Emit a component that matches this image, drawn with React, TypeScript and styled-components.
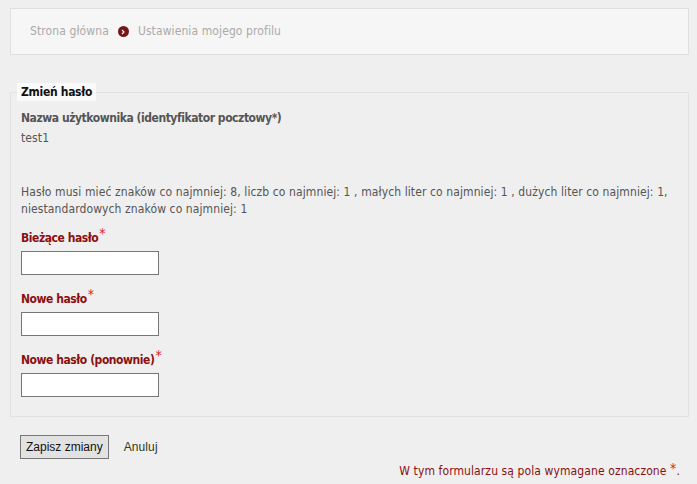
import styled, { createGlobalStyle } from 'styled-components';

const GlobalStyle = createGlobalStyle`
    body {
        margin: 0;
        background: #efefef;
        font-family: "DejaVu Sans Condensed", "DejaVu Sans", sans-serif;
        font-size: 12px;
        letter-spacing: 0.1px;
        color: #555;
    }
`;

const Page = styled.div`
    padding: 8px 8px 0 10px;
`;

const Breadcrumb = styled.nav`
    display: flex;
    align-items: center;
    gap: 9px;
    height: 45px;
    padding-left: 19px;
    background: #f6f6f6;
    border: 1px solid #e0e0e0;
    color: #aaa;
`;

const Crumb = styled.span`
    line-height: 17px;
`;

const Arrow = styled.span`
    display: inline-flex;
    align-items: center;
    justify-content: center;
    width: 11px;
    height: 11px;
    border-radius: 50%;
    background: #7a1414;
`;

const Fieldset = styled.fieldset`
    margin: 28px 0 0 0;
    padding: 0 10px 19px 10px;
    border: 1px solid #e2e2e2;
    min-width: 0;
`;

const Legend = styled.legend`
    margin-left: -4px;
    padding: 0 4px;
    height: 18px;
    line-height: 18px;
    background: #fafafa;
    font-weight: bold;
    letter-spacing: -0.3px;
    color: #111;
`;

const Label = styled.div<{ $required?: boolean }>`
    font-weight: bold;
    line-height: 17px;
    letter-spacing: -0.45px;
    color: ${p => (p.$required ? '#8b1010' : '#555')};
`;

const Value = styled.div`
    line-height: 17px;
    margin-top: 3px;
`;

const Help = styled.p`
    margin: 37px 0 0 0;
    line-height: 17px;
`;

const Star = styled.span`
    color: #e02020;
    font-size: 14px;
    font-weight: normal;
    line-height: 0;
    position: relative;
    top: -4px;
    margin-left: 1px;
`;

const Field = styled.div<{ $first?: boolean }>`
    margin-top: ${p => (p.$first ? '12px' : '16px')};
`;

const Input = styled.input`
    display: block;
    box-sizing: border-box;
    width: 138px;
    height: 24px;
    margin-top: 4px;
    border: 1px solid #777;
    background: #fff;
`;

const Actions = styled.div`
    display: flex;
    align-items: center;
    gap: 15px;
    margin: 18px 0 0 10px;
`;

const Button = styled.button`
    box-sizing: border-box;
    height: 24px;
    padding: 0 5px;
    border: 1px solid #777;
    background: #e2e2e2;
    font-family: "Liberation Sans", Arial, sans-serif;
    font-size: 12px;
    color: #111;
`;

const Cancel = styled.a`
    font-family: "Liberation Sans", Arial, sans-serif;
    font-size: 12px;
    color: #2f3a1c;
    text-decoration: none;
`;

const Note = styled.p`
    margin: 4px 9px 0 0;
    text-align: right;
    line-height: 17px;
    color: #8b1010;
`;

const NoteStar = styled.span`
    color: #e02020;
    font-size: 14px;
    line-height: 0;
    position: relative;
    top: -2px;
`;

const fields = ['Bieżące hasło', 'Nowe hasło', 'Nowe hasło (ponownie)'];

const App = () => {
    return (
        <>
            <GlobalStyle />
            <Page>
                <Breadcrumb>
                    <Crumb>Strona główna</Crumb>
                    <Arrow>
                        <svg width="6" height="6" viewBox="0 0 6 6">
                            <path d="M2 1 L4 3 L2 5" stroke="#fff" strokeWidth="1.2" fill="none" />
                        </svg>
                    </Arrow>
                    <Crumb>Ustawienia mojego profilu</Crumb>
                </Breadcrumb>
                <Fieldset>
                    <Legend>Zmień hasło</Legend>
                    <Label style={{ marginTop: 9 }}>Nazwa użytkownika (identyfikator pocztowy*)</Label>
                    <Value>test1</Value>
                    <Help>
                        Hasło musi mieć znaków co najmniej: 8, liczb co najmniej: 1 , małych liter co najmniej: 1 , dużych liter co najmniej: 1, niestandardowych znaków co najmniej: 1
                    </Help>
                    {fields.map((f, i) => (
                        <Field key={f} $first={i === 0}>
                            <Label $required>
                                {f}
                                <Star>*</Star>
                            </Label>
                            <Input type="password" />
                        </Field>
                    ))}
                </Fieldset>
                <Actions>
                    <Button>Zapisz zmiany</Button>
                    <Cancel href="#">Anuluj</Cancel>
                </Actions>
                <Note>
                    W tym formularzu są pola wymagane oznaczone <NoteStar>*</NoteStar>.
                </Note>
            </Page>
        </>
    );
};

export default App;
